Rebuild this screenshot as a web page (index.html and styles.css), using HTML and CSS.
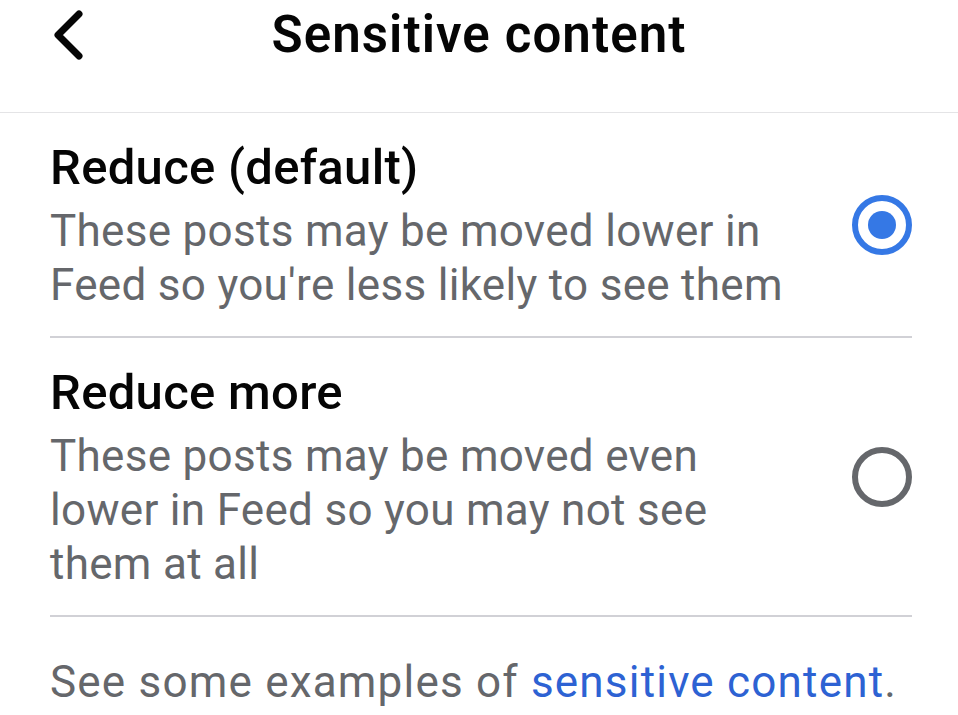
FILE: index.html
```html
<!DOCTYPE html>
<html lang="en">
<head>
<meta charset="utf-8">
<title>Sensitive content</title>
<link rel="stylesheet" href="styles.css">
</head>
<body>
<header class="topbar">
  <button class="back" aria-label="Back">
    <svg width="40" height="56" viewBox="0 0 40 56"><path d="M32 6 L11 27 L32 48" fill="none" stroke="#050505" stroke-width="7" stroke-linecap="round" stroke-linejoin="round"/></svg>
  </button>
  <h1 class="title">Sensitive content</h1>
</header>
<main class="content">
  <div class="option">
    <div class="option-text">
      <div class="option-title">Reduce (default)</div>
      <div class="option-desc">These posts may be moved lower in<br>Feed so you're less likely to see them</div>
    </div>
    <span class="radio radio-on"></span>
  </div>
  <div class="option">
    <div class="option-text">
      <div class="option-title">Reduce more</div>
      <div class="option-desc">These posts may be moved even<br>lower in Feed so you may not see<br>them at all</div>
    </div>
    <span class="radio"></span>
  </div>
  <p class="footer">See some examples of <a href="#" class="link">sensitive content</a>.</p>
</main>
</body>
</html>
```

FILE: styles.css
```css
html, body {
  margin: 0;
  padding: 0;
  background: #ffffff;
}
body {
  font-family: Roboto, Inter, "Noto Sans", "Liberation Sans", sans-serif;
  color: #050505;
  width: 958px;
  height: 715px;
  overflow: hidden;
}
.topbar {
  position: relative;
  height: 112px;
  border-bottom: 1px solid #e4e4e6;
  display: flex;
  justify-content: center;
}
.back {
  position: absolute;
  left: 47px;
  top: 8px;
  border: 0;
  background: none;
  padding: 0;
  width: 40px;
  height: 56px;
}
.back svg { display: block; }
.title {
  margin: 0;
  font-size: 51px;
  font-weight: 600;
  line-height: 70px;
  letter-spacing: 1.1px;
}
.content {
  padding: 0 46px 0 50px;
}
.option {
  display: flex;
  align-items: center;
  justify-content: space-between;
  padding: 24px 0;
  border-bottom: 2px solid #d1d1d6;
}
.option-title {
  font-size: 49px;
  font-weight: 500;
  line-height: 62px;
  letter-spacing: 0.3px;
}
.option-desc {
  margin-top: 5px;
  font-size: 44px;
  line-height: 54px;
  letter-spacing: 0.3px;
  color: #65676b;
}
.radio {
  flex: none;
  box-sizing: border-box;
  width: 60px;
  height: 60px;
  border-radius: 50%;
  border: 6px solid #65676b;
  display: flex;
  align-items: center;
  justify-content: center;
}
.radio-on {
  border-color: #3578e5;
}
.radio-on::after {
  content: "";
  width: 28px;
  height: 28px;
  border-radius: 50%;
  background: #3578e5;
}
.footer {
  margin: 0;
  padding-top: 38px;
  font-size: 44px;
  line-height: 54px;
  letter-spacing: 1.2px;
  color: #65676b;
}
.link {
  color: #2d62d3;
  text-decoration: none;
}
```
